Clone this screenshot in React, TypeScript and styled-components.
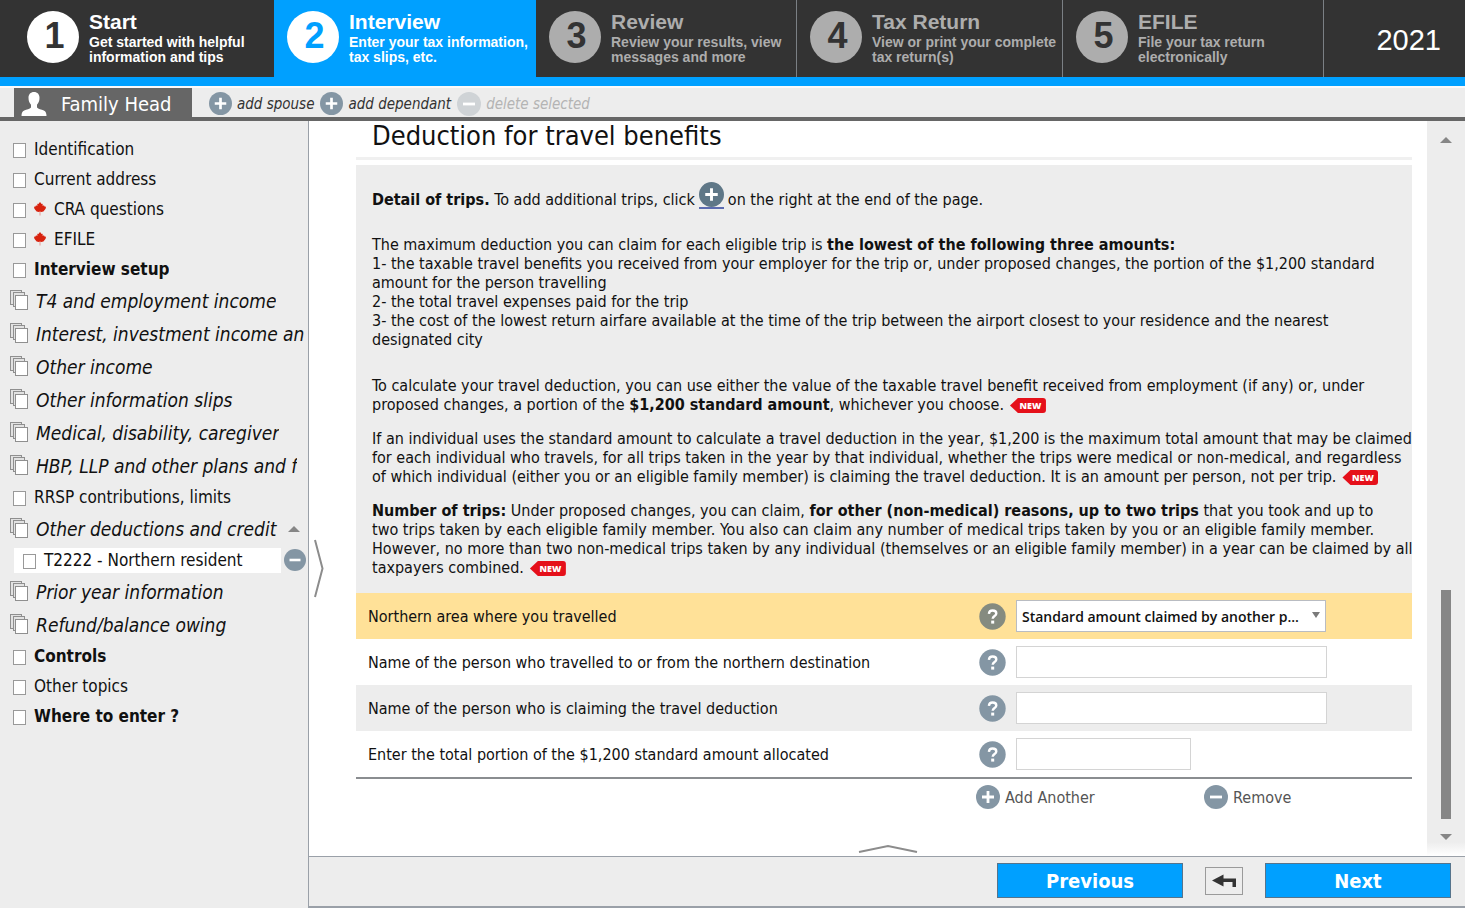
import React from 'react';
import styled, { createGlobalStyle, css } from 'styled-components';

const uiFont = '"DejaVu Sans Condensed", "DejaVu Sans", sans-serif';
const headerFont = '"Liberation Sans", Arial, sans-serif';
const selectFont = '"Open Sans", "Noto Sans", sans-serif';

const color = {
  blue: '#00a0ff',
  dark: '#333333',
  grey: '#ededed',
  rule: '#666666',
  border: '#9aa0a8',
  icon: '#8496a4',
};

const GlobalStyle = createGlobalStyle`
  *, *::before, *::after { box-sizing: border-box; }
  body { margin: 0; background: #fff; color: #111; font-family: ${uiFont}; }
  button { margin: 0; padding: 0; border: 0; background: none; font: inherit; color: inherit; cursor: pointer; }
  a { color: inherit; text-decoration: none; }
  h1, p { margin: 0; }
  svg { display: block; flex: none; }
`;

const Page = styled.div`
  display: flex;
  flex-direction: column;
  min-height: 100vh;
`;

/* ---------- Step header ---------- */

const Steps = styled.header`
  display: grid;
  grid-template-columns: 274fr 262fr 261fr 266fr 261fr 141fr;
  height: 86px;
  background: ${color.dark};
  border-bottom: 9px solid ${color.blue};
  font-family: ${headerFont};
`;

type StepState = 'done' | 'active' | 'todo';

const Step = styled.a<{ $state: StepState; $first?: boolean }>`
  display: flex;
  align-items: flex-start;
  gap: 10px;
  min-width: 0;
  padding: 11px 0 0 ${(p) => (p.$first ? 27 : 13)}px;
  color: ${(p) => (p.$state === 'todo' ? '#adadad' : '#ffffff')};
  background: ${(p) => (p.$state === 'active' ? color.blue : color.dark)};
  border-right: ${(p) => (p.$state === 'todo' ? '1px solid #7b8085' : '0')};
`;

const StepNumber = styled.span<{ $state: StepState }>`
  flex: none;
  width: 52px;
  height: 52px;
  padding-left: 3px;
  border-radius: 50%;
  background: ${(p) => (p.$state === 'todo' ? '#adadad' : '#ffffff')};
  color: ${(p) => (p.$state === 'active' ? color.blue : color.dark)};
  font-size: 36px;
  font-weight: 700;
  line-height: 50px;
  text-align: center;
`;

const StepText = styled.span`
  display: flex;
  flex-direction: column;
  font-weight: 700;
  white-space: nowrap;
`;

const StepTitle = styled.span`
  margin-bottom: 3px;
  font-size: 21px;
  line-height: 21px;
`;

const StepNote = styled.span`
  font-size: 14px;
  line-height: 15px;
`;

const Year = styled.div`
  display: flex;
  align-items: center;
  justify-content: flex-end;
  padding: 4px 24px 0 0;
  color: #fff;
  font-size: 29px;
`;

/* ---------- Family bar ---------- */

const FamilyBar = styled.nav`
  display: flex;
  align-items: center;
  height: 35px;
  padding-left: 14px;
  background: ${color.grey};
  border-top: 2px solid #fafafa;
  border-bottom: 4px solid ${color.rule};
`;

const FamilyTab = styled.button`
  display: flex;
  align-items: center;
  gap: 14px;
  width: 178px;
  height: 100%;
  margin-right: 17px;
  padding: 2px 0 0 7px;
  background: ${color.rule};
  color: #fff;
  font-size: 20px;
  white-space: nowrap;
`;

const BarAction = styled.button<{ $muted?: boolean }>`
  display: flex;
  align-items: center;
  gap: 5px;
  margin-right: 6px;
  padding-top: 2px;
  color: ${(p) => (p.$muted ? '#b4b4b4' : '#333')};
  font-size: 15px;
  font-style: italic;
  white-space: nowrap;
`;

/* ---------- Body ---------- */

const Body = styled.div`
  flex: 1;
  display: grid;
  grid-template-columns: 309px minmax(0, 1fr);
`;

const Sidebar = styled.nav`
  padding-top: 13px;
  background: ${color.grey};
  border-right: 1px solid ${color.border};
  overflow: hidden;
`;

type NavKind = 'page' | 'section' | 'folder' | 'child';

const navKind = {
  page: css`
    height: 30px;
    font-size: 17px;
  `,
  section: css`
    height: 30px;
    font-size: 17px;
    font-weight: 700;
  `,
  folder: css`
    height: 33px;
    font-size: 19px;
    font-style: italic;
  `,
  child: css`
    height: 30px;
    font-size: 17px;
  `,
};

const NavRow = styled.div<{ $kind: NavKind }>`
  display: flex;
  align-items: center;
  padding-left: ${(p) => (p.$kind === 'child' ? 14 : p.$kind === 'folder' ? 10 : 13)}px;
  white-space: nowrap;
  ${(p) => navKind[p.$kind]}
`;

const NavLink = styled.a<{ $cut?: boolean; $current?: boolean }>`
  display: flex;
  align-items: center;
  gap: 8px;
  overflow: hidden;
  ${(p) => p.$cut && 'width: 271px; flex: none;'}
  ${(p) =>
    p.$current &&
    css`
      flex: none;
      width: 267px;
      height: 25px;
      padding-left: 9px;
      background: #fff;
    `}
`;

const NavToggle = styled.button`
  padding: 7px;
`;

const NavRemove = styled.button`
  margin-left: 3px;
`;

const Main = styled.main`
  display: flex;
  flex-direction: column;
  min-width: 0;
`;

const Workspace = styled.div`
  position: relative;
  flex: 1;
  display: flex;
  background: #fff;
`;

const SideHandle = styled.button`
  position: absolute;
  left: 4px;
  top: calc(50% + 50px);
`;

const BottomHandle = styled.button`
  position: absolute;
  left: calc(50% - 29px);
  bottom: 3px;
`;

const Content = styled.div`
  flex: 1;
  min-width: 0;
  padding: 0 15px 44px 47px;
`;

const Title = styled.h1`
  height: 39px;
  padding-left: 16px;
  border-bottom: 3px solid #f0f0f0;
  font-size: 27px;
  font-weight: 400;
  line-height: 29px;
  white-space: nowrap;
`;

const Notes = styled.section`
  margin-top: 5px;
  padding: 17px 0 16px 16px;
  background: ${color.grey};
  font-size: 16px;
  line-height: 19px;
  white-space: nowrap;
`;

const Note = styled.p<{ $gap?: number }>`
  margin-bottom: ${(p) => p.$gap ?? 0}px;
`;

const LeadNote = styled.p`
  display: flex;
  align-items: flex-end;
  gap: 4px;
  margin-bottom: 26px;
`;

const AddLink = styled.a`
  border-bottom: 2px solid #5d6cb0;
  line-height: 0;
`;

const NewBadge = styled.span`
  display: inline-block;
  width: 36px;
  height: 15px;
  margin-left: 6px;
  padding-left: 5px;
  border-radius: 3px;
  background: #e5101a;
  clip-path: polygon(0 50%, 8px 0, 100% 0, 100% 100%, 8px 100%);
  color: #fff;
  font-family: "Open Sans", sans-serif;
  font-size: 9px;
  font-weight: 800;
  line-height: 15px;
  text-align: center;
  vertical-align: 1px;
`;

const Form = styled.form`
  border-bottom: 2px solid #8a8d90;
`;

const Field = styled.div<{ $tone?: 'active' | 'shade' }>`
  display: grid;
  grid-template-columns: minmax(0, 1fr) 37px 396px;
  align-items: center;
  height: 46px;
  padding-left: 12px;
  background: ${(p) =>
    p.$tone === 'active' ? '#ffe198' : p.$tone === 'shade' ? color.grey : '#fff'};
`;

const FieldLabel = styled.label`
  font-size: 16px;
  white-space: nowrap;
`;

const HelpButton = styled.button`
  justify-self: start;
`;

const TextInput = styled.input<{ $short?: boolean }>`
  width: ${(p) => (p.$short ? 175 : 311)}px;
  height: 32px;
  padding: 0 6px;
  border: 1px solid #d4d4d4;
  background: #fff;
  font: 16px ${uiFont};
`;

const SelectBox = styled.span`
  position: relative;
  width: 310px;
`;

const Select = styled.select`
  display: block;
  width: 100%;
  height: 32px;
  padding: 0 20px 0 5px;
  appearance: none;
  border: 1px solid #b9bcc2;
  border-radius: 0;
  background: #fff;
  color: #111;
  font: 600 14px ${selectFont};
`;

const SelectArrow = styled.svg`
  position: absolute;
  right: 6px;
  top: 12px;
  pointer-events: none;
`;

const TripActions = styled.div`
  display: grid;
  grid-template-columns: minmax(0, 1fr) 228px 208px;
  padding-top: 6px;
`;

const TripAction = styled.button<{ $column: number }>`
  grid-row: 1;
  grid-column: ${(p) => p.$column};
  display: flex;
  align-items: center;
  gap: 5px;
  justify-self: start;
  color: #555;
  font-size: 16px;
`;

const Scrollbar = styled.div`
  flex: none;
  display: flex;
  flex-direction: column;
  align-items: center;
  width: 38px;
  padding: 16px 0;
  background: linear-gradient(to top, #fff, ${color.grey} 14px);
`;

const ScrollTrack = styled.div`
  flex: 1;
  display: flex;
  align-items: flex-end;
  margin: 7px 0 15px;
`;

const ScrollThumb = styled.div`
  width: 10px;
  height: 229px;
  background: #868686;
`;

const FooterBar = styled.footer`
  display: flex;
  align-items: center;
  justify-content: flex-end;
  gap: 22px;
  height: 52px;
  padding: 0 14px 2px 0;
  background: ${color.grey};
  border-top: 1px solid ${color.border};
  border-bottom: 2px solid ${color.border};
`;

const StepButton = styled.button`
  width: 186px;
  height: 35px;
  border: 1px solid #56748c;
  background: ${color.blue};
  color: #fff;
  font-size: 20px;
  font-weight: 700;
`;

const BackButton = styled.button`
  display: flex;
  align-items: center;
  justify-content: center;
  width: 38px;
  height: 28px;
  border: 1px solid #9a9a9a;
`;

/* ---------- Icons ---------- */

function RoundIcon({ size, minus, fill = color.icon }: { size: number; minus?: boolean; fill?: string }) {
  return (
    <svg width={size} height={size} viewBox="0 0 24 24" aria-hidden="true">
      <circle cx="12" cy="12" r="12" fill={fill} />
      <path d={minus ? 'M6 12h12' : 'M6 12h12M12 6v12'} stroke="#fff" strokeWidth="2.8" />
    </svg>
  );
}

function HelpIcon({ fill = color.icon }: { fill?: string }) {
  return (
    <svg width="27" height="27" viewBox="0 0 27 27" aria-hidden="true">
      <circle cx="13.5" cy="13.5" r="13.2" fill={fill} />
      <path
        d="M9.9 10.8c.2-2.2 1.6-3.3 3.7-3.3 2.2 0 3.7 1.2 3.7 3 0 2.600-3.600 2.500-3.600 5.300"
        fill="none"
        stroke="#fff"
        strokeWidth="2.4"
      />
      <rect x="12.2" y="17.6" width="3" height="3" fill="#fff" />
    </svg>
  );
}

function PersonIcon() {
  return (
    <svg width="26" height="24" viewBox="0 0 26 24" fill="#fff" aria-hidden="true">
      <path d="M13 0c3.400 0 5.500 2.300 5.500 5.800 0 3-.9 5.400-2.500 6.900v2.800c1.200 1.500 4.400 2 6.800 3.100 1.900.9 2.700 2.400 2.700 5.400H.5c0-3 .8-4.500 2.700-5.400 2.400-1.100 5.600-1.600 6.800-3.100v-2.800C8.400 11.200 7.500 8.800 7.500 5.800 7.500 2.300 9.600 0 13 0z" />
    </svg>
  );
}

function PageIcon() {
  return (
    <svg width="13" height="17" viewBox="0 0 13 17" aria-hidden="true">
      <rect x="0.5" y="2.5" width="12" height="14" fill="#fff" stroke="#999" />
    </svg>
  );
}

function FolderIcon() {
  return (
    <svg width="18" height="22" viewBox="0 0 18 22" stroke="#8f8f8f" aria-hidden="true">
      <rect x="0.5" y="0.5" width="11" height="14" fill="#e2e2e2" />
      <rect x="3.5" y="2.5" width="11" height="14" fill="#e2e2e2" />
      <rect x="5.5" y="5.5" width="12" height="14" fill="#fff" />
    </svg>
  );
}

function LeafIcon() {
  return (
    <svg width="12" height="14" viewBox="0 0 12 14" aria-hidden="true">
      <path
        d="M6 0l1.600 2 1-.3.100 2.300L10 3.200l.5 1.300 1.500.2-.4 2-2.200 2.700-2.300.7L6 9.700l-1.100.4-2.300-.7L.4 6.700 0 4.700l1.500-.2.500-1.300L3.300 4l.1-2.300 1 .3z"
        fill="#d8230f"
      />
      <path d="M6 9.500v4" stroke="#e79a92" />
    </svg>
  );
}

function Triangle({ down }: { down?: boolean }) {
  return (
    <svg width="12" height="6" viewBox="0 0 12 6" aria-hidden="true">
      <path d={down ? 'M0 0h12L6 6z' : 'M0 6h12L6 0z'} fill="#868686" />
    </svg>
  );
}

function BackIcon() {
  return (
    <svg width="24" height="16" viewBox="0 0 24 16" aria-hidden="true">
      <path d="M0 7.5L11.5 1.500v4H24V14h-3.500V9h-9v4.500z" fill="#333" />
    </svg>
  );
}

/* ---------- Data ---------- */

interface StepData {
  title: string;
  note: [string, string];
  state: StepState;
}

const steps: StepData[] = [
  { title: 'Start', note: ['Get started with helpful', 'information and tips'], state: 'done' },
  { title: 'Interview', note: ['Enter your tax information,', 'tax slips, etc.'], state: 'active' },
  { title: 'Review', note: ['Review your results, view', 'messages and more'], state: 'todo' },
  { title: 'Tax Return', note: ['View or print your complete', 'tax return(s)'], state: 'todo' },
  { title: 'EFILE', note: ['File your tax return', 'electronically'], state: 'todo' },
];

interface NavData {
  text: string;
  kind: NavKind;
  leaf?: boolean;
  open?: boolean;
}

const navItems: NavData[] = [
  { text: 'Identification', kind: 'page' },
  { text: 'Current address', kind: 'page' },
  { text: 'CRA questions', kind: 'page', leaf: true },
  { text: 'EFILE', kind: 'page', leaf: true },
  { text: 'Interview setup', kind: 'section' },
  { text: 'T4 and employment income', kind: 'folder' },
  { text: 'Interest, investment income an', kind: 'folder' },
  { text: 'Other income', kind: 'folder' },
  { text: 'Other information slips', kind: 'folder' },
  { text: 'Medical, disability, caregiver', kind: 'folder' },
  { text: 'HBP, LLP and other plans and f', kind: 'folder' },
  { text: 'RRSP contributions, limits', kind: 'page' },
  { text: 'Other deductions and credit', kind: 'folder', open: true },
  { text: 'T2222 - Northern resident', kind: 'child' },
  { text: 'Prior year information', kind: 'folder' },
  { text: 'Refund/balance owing', kind: 'folder' },
  { text: 'Controls', kind: 'section' },
  { text: 'Other topics', kind: 'page' },
  { text: 'Where to enter ?', kind: 'section' },
];

export default function App() {
  return (
    <Page>
      <GlobalStyle />
      <Steps>
        {steps.map((s, i) => (
          <Step key={s.title} href="#" $state={s.state} $first={i === 0}>
            <StepNumber $state={s.state}>{i + 1}</StepNumber>
            <StepText>
              <StepTitle>{s.title}</StepTitle>
              <StepNote>{s.note[0]}</StepNote>
              <StepNote>{s.note[1]}</StepNote>
            </StepText>
          </Step>
        ))}
        <Year>2021</Year>
      </Steps>

      <FamilyBar>
        <FamilyTab>
          <PersonIcon />
          Family Head
        </FamilyTab>
        <BarAction>
          <RoundIcon size={23} />
          add spouse
        </BarAction>
        <BarAction>
          <RoundIcon size={23} />
          add dependant
        </BarAction>
        <BarAction $muted>
          <RoundIcon size={24} minus fill="#cfd3d6" />
          delete selected
        </BarAction>
      </FamilyBar>

      <Body>
        <Sidebar>
          {navItems.map((item) => (
            <NavRow key={item.text} $kind={item.kind}>
              <NavLink href="#" $cut={item.open} $current={item.kind === 'child'}>
                {item.kind === 'folder' ? <FolderIcon /> : <PageIcon />}
                {item.leaf && <LeafIcon />}
                {item.text}
              </NavLink>
              {item.open && (
                <NavToggle aria-label="Collapse">
                  <Triangle />
                </NavToggle>
              )}
              {item.kind === 'child' && (
                <NavRemove aria-label="Remove form">
                  <RoundIcon size={22} minus />
                </NavRemove>
              )}
            </NavRow>
          ))}
        </Sidebar>

        <Main>
          <Workspace>
            <Content>
              <Title>Deduction for travel benefits</Title>
              <Notes>
                <LeadNote>
                  <span>
                    <b>Detail of trips.</b> To add additional trips, click
                  </span>
                  <AddLink href="#" aria-label="Add trip">
                    <RoundIcon size={25} fill="#5f7787" />
                  </AddLink>
                  <span>on the right at the end of the page.</span>
                </LeadNote>
                <Note $gap={27}>
                  The maximum deduction you can claim for each eligible trip is{' '}
                  <b>the lowest of the following three amounts:</b>
                  <br />
                  1- the taxable travel benefits you received from your employer for the trip or, under proposed
                  changes, the portion of the $1,200 standard
                  <br />
                  amount for the person travelling
                  <br />
                  2- the total travel expenses paid for the trip
                  <br />
                  3- the cost of the lowest return airfare available at the time of the trip between the airport
                  closest to your residence and the nearest
                  <br />
                  designated city
                </Note>
                <Note $gap={15}>
                  To calculate your travel deduction, you can use either the value of the taxable travel benefit
                  received from employment (if any) or, under
                  <br />
                  proposed changes, a portion of the <b>$1,200 standard amount</b>, whichever you choose.
                  <NewBadge>NEW</NewBadge>
                </Note>
                <Note $gap={15}>
                  If an individual uses the standard amount to calculate a travel deduction in the year, $1,200 is the
                  maximum total amount that may be claimed
                  <br />
                  for each individual who travels, for all trips taken in the year by that individual, whether the
                  trips were medical or non-medical, and regardless
                  <br />
                  of which individual (either you or an eligible family member) is claiming the travel deduction. It is
                  an amount per person, not per trip.
                  <NewBadge>NEW</NewBadge>
                </Note>
                <Note>
                  <b>Number of trips:</b> Under proposed changes, you can claim,{' '}
                  <b>for other (non-medical) reasons, up to two trips</b> that you took and up to
                  <br />
                  two trips taken by each eligible family member. You also can claim any number of medical trips taken
                  by you or an eligible family member.
                  <br />
                  However, no more than two non-medical trips taken by any individual (themselves or an eligible family
                  member) in a year can be claimed by all
                  <br />
                  taxpayers combined.
                  <NewBadge>NEW</NewBadge>
                </Note>
              </Notes>

              <Form>
                <Field $tone="active">
                  <FieldLabel htmlFor="area">Northern area where you travelled</FieldLabel>
                  <HelpButton type="button" aria-label="Help">
                    <HelpIcon fill="#858b80" />
                  </HelpButton>
                  <SelectBox>
                    <Select id="area">
                      <option>Standard amount claimed by another p...</option>
                    </Select>
                    <SelectArrow width="8" height="6" viewBox="0 0 8 6" aria-hidden="true">
                      <path d="M0 0h8L4 6z" fill="#7a7a7a" />
                    </SelectArrow>
                  </SelectBox>
                </Field>
                <Field>
                  <FieldLabel htmlFor="traveller">
                    Name of the person who travelled to or from the northern destination
                  </FieldLabel>
                  <HelpButton type="button" aria-label="Help">
                    <HelpIcon />
                  </HelpButton>
                  <TextInput id="traveller" />
                </Field>
                <Field $tone="shade">
                  <FieldLabel htmlFor="claimant">Name of the person who is claiming the travel deduction</FieldLabel>
                  <HelpButton type="button" aria-label="Help">
                    <HelpIcon />
                  </HelpButton>
                  <TextInput id="claimant" />
                </Field>
                <Field>
                  <FieldLabel htmlFor="portion">
                    Enter the total portion of the $1,200 standard amount allocated
                  </FieldLabel>
                  <HelpButton type="button" aria-label="Help">
                    <HelpIcon />
                  </HelpButton>
                  <TextInput id="portion" $short />
                </Field>
              </Form>

              <TripActions>
                <TripAction $column={2}>
                  <RoundIcon size={24} />
                  Add Another
                </TripAction>
                <TripAction $column={3}>
                  <RoundIcon size={24} minus />
                  Remove
                </TripAction>
              </TripActions>
            </Content>

            <Scrollbar>
              <Triangle />
              <ScrollTrack>
                <ScrollThumb />
              </ScrollTrack>
              <Triangle down />
            </Scrollbar>

            <SideHandle aria-label="Expand menu">
              <svg width="12" height="60" viewBox="0 0 12 60" fill="none" aria-hidden="true">
                <path d="M2 1l7.500 28.500L2 58" stroke="#8c8c8c" strokeWidth="2" />
              </svg>
            </SideHandle>
            <BottomHandle aria-label="Expand panel">
              <svg width="60" height="9" viewBox="0 0 60 9" fill="none" aria-hidden="true">
                <path d="M1 8L30 2 59 8" stroke="#8c8c8c" strokeWidth="2" />
              </svg>
            </BottomHandle>
          </Workspace>

          <FooterBar>
            <StepButton>Previous</StepButton>
            <BackButton aria-label="Back">
              <BackIcon />
            </BackButton>
            <StepButton>Next</StepButton>
          </FooterBar>
        </Main>
      </Body>
    </Page>
  );
}
